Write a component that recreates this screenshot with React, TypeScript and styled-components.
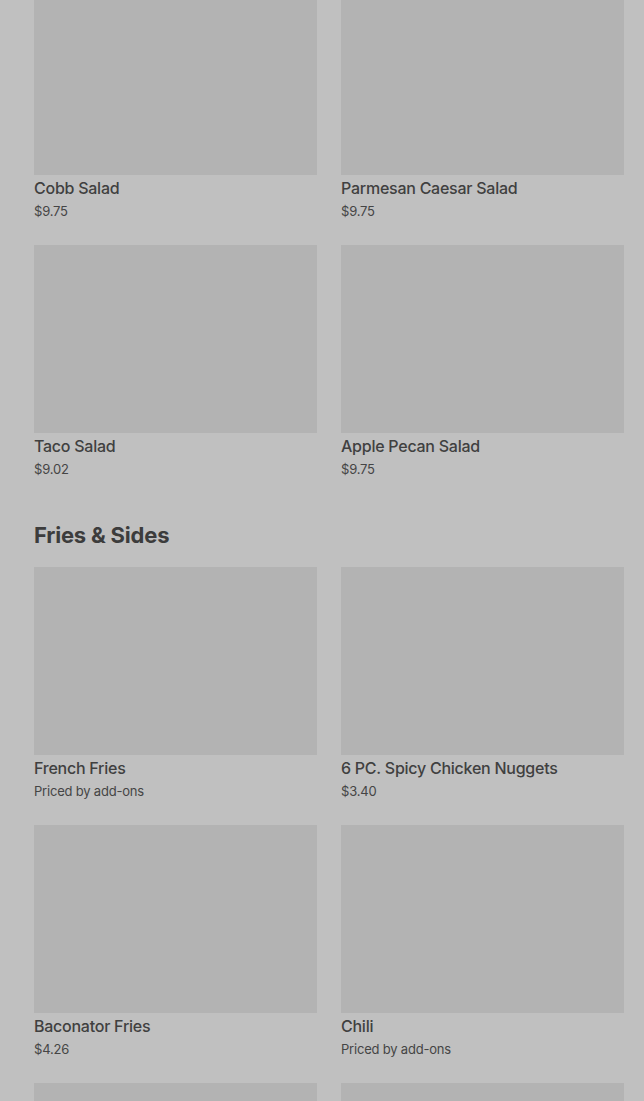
import React from "react";
import styled, { createGlobalStyle } from "styled-components";

type Item = {
  name?: string;
  price?: string;
};

const GlobalStyle = createGlobalStyle`
  html, body {
    margin: 0;
    padding: 0;
    background: #c0c0c0;
    overflow: hidden;
  }
  body {
    font-family: Inter, "Liberation Sans", sans-serif;
    -webkit-font-smoothing: antialiased;
  }
`;

const Page = styled.main`
  height: 1101px;
  overflow: hidden;
  padding: 0 20px 0 34px;
  box-sizing: border-box;
`;

const Scroller = styled.div`
  margin-top: -13px;
`;

const Section = styled.section`
  display: flex;
  flex-direction: column;
`;

const SectionTitle = styled.h2`
  margin: 42px 0 18px;
  font-size: 22px;
  line-height: 28px;
  font-weight: 700;
  letter-spacing: -0.2px;
  color: #3c3c3c;
`;

const Grid = styled.div`
  display: grid;
  grid-template-columns: repeat(2, 283px);
  column-gap: 24px;
  row-gap: 24px;
`;

const Card = styled.div`
  display: flex;
  flex-direction: column;
  cursor: pointer;
`;

const Thumb = styled.div`
  height: 188px;
  background: #b3b3b3;
`;

const Name = styled.div`
  margin-top: 3px;
  font-size: 16px;
  line-height: 20px;
  font-weight: 500;
  letter-spacing: -0.25px;
  color: #404040;
`;

const Price = styled.div`
  margin-top: 3px;
  font-size: 13px;
  line-height: 20px;
  font-weight: 400;
  letter-spacing: -0.2px;
  color: #454545;
`;

const salads: Item[] = [
  { name: "Cobb Salad", price: "$9.75" },
  { name: "Parmesan Caesar Salad", price: "$9.75" },
  { name: "Taco Salad", price: "$9.02" },
  { name: "Apple Pecan Salad", price: "$9.75" },
];

// last two only peek in at the bottom edge, their text is below the fold
const sides: Item[] = [
  { name: "French Fries", price: "Priced by add-ons" },
  { name: "6 PC. Spicy Chicken Nuggets", price: "$3.40" },
  { name: "Baconator Fries", price: "$4.26" },
  { name: "Chili", price: "Priced by add-ons" },
  {},
  {},
];

function MenuCard({ item }: { item: Item }) {
  return (
    <Card>
      <Thumb />
      {item.name && <Name>{item.name}</Name>}
      {item.price && <Price>{item.price}</Price>}
    </Card>
  );
}

export default function App() {
  return (
    <>
      <GlobalStyle />
      <Page>
        <Scroller>
          <Section>
            <Grid>
              {salads.map((s, i) => (
                <MenuCard key={i} item={s} />
              ))}
            </Grid>
          </Section>
          <Section>
            <SectionTitle>Fries &amp; Sides</SectionTitle>
            <Grid>
              {sides.map((s, i) => (
                <MenuCard key={i} item={s} />
              ))}
            </Grid>
          </Section>
        </Scroller>
      </Page>
    </>
  );
}
